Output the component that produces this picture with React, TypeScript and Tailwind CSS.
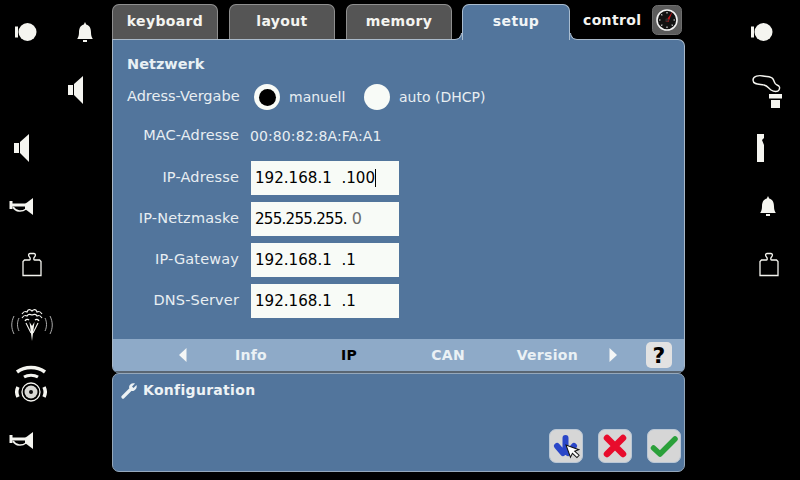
import type { ReactNode } from "react";

const font = "font-['DejaVu_Sans',sans-serif]";

function Ball() {
  return (
    <svg width="24" height="20" viewBox="0 0 24 20">
      <rect x="1" y="4.500" width="3" height="11" fill="#f5f5f0" />
      <circle cx="13.500" cy="10" r="9" fill="#f5f5f0" />
    </svg>
  );
}

function Bell() {
  return (
    <svg width="18" height="22" viewBox="0 0 18 22">
      <path d="M9 1l1.200 2.500C14 4.500 15 8 15 11.500c0 2.500.5 4.500 1.800 6.500H1.200C2.500 16 3 14 3 11.500 3 8 4 4.500 7.800 3.500z" fill="#f5f5f0" />
      <rect x="7" y="19" width="4" height="2" fill="#f5f5f0" />
    </svg>
  );
}

function Speaker() {
  return (
    <svg width="18" height="30" viewBox="0 0 18 30">
      <rect x="1" y="10" width="5" height="10" fill="#f5f5f0" />
      <path d="M7 9L16 1v28L7 20z" fill="#f5f5f0" />
    </svg>
  );
}

function Horn() {
  return (
    <svg width="26" height="20" viewBox="0 0 26 20">
      <path d="M2 5v8M2 9h16" stroke="#f5f5f0" strokeWidth="3" fill="none" />
      <path d="M4 11c3 5 9 5 13 2" stroke="#f5f5f0" strokeWidth="1.500" fill="none" />
      <path d="M16 8l8-6v17l-8-6z" fill="#f5f5f0" />
    </svg>
  );
}

function Weight() {
  return (
    <svg width="20" height="25" viewBox="0 0 20 25">
      <path d="M1 23.500V9.500L2.500 8H7.500C8.500 8 8.500 6 7.500 5 6 3.500 6.500 1.500 8 1.500h4c1.500 0 2 2 .5 3.500-1 1-1 3 0 3h5L19 9.500v14z" fill="none" stroke="#f5f5f0" strokeWidth="1.300" />
    </svg>
  );
}

function Fountain() {
  return (
    <svg width="42" height="36" viewBox="0 0 42 36">
      <path d="M3 28c-3-6-3-12 0-18M8 25c-2-4-2-9 0-13M39 28c3-6 3-12 0-18M34 25c2-4 2-9 0-13" stroke="#bdbdbd" strokeWidth="0.900" fill="none" />
      <path d="M11 8c2-3 3-3 5-2 1-3 3-3 5-1 2-2 4-2 5 1 2-1 3-1 5 2M11 12c2-3 3-3 5-2 1-2 3-2 5-1 2-1 4-1 5 1 2-1 3-1 5 2M14 15c1-2 3-2 4-1M24 14c1-1 3-1 4 1" stroke="#f5f5f0" strokeWidth="1.200" fill="none" />
      <path d="M21 35l-2.500-19 2.500 4 2.500-4z" fill="#f5f5f0" />
      <path d="M20 27l-5-10M22 27l5-10" stroke="#f5f5f0" strokeWidth="1.100" fill="none" />
    </svg>
  );
}

function WifiDial() {
  return (
    <svg width="32" height="40" viewBox="0 0 32 40">
      <path d="M2 9c8-6 20-6 28 0" stroke="#f5f5f0" strokeWidth="3.500" fill="none" />
      <path d="M9 14c4-2.500 10-2.500 14 0" stroke="#f5f5f0" strokeWidth="3" fill="none" />
      <circle cx="16" cy="29" r="9" fill="none" stroke="#f5f5f0" strokeWidth="1.300" />
      <circle cx="16" cy="29" r="6.500" fill="#d8d8d4" />
      <circle cx="16" cy="29" r="2" fill="#111" />
      <path d="M3 24c-1.500 3-1.500 7 0 10M29 24c1.500 3 1.500 7 0 10" stroke="#f5f5f0" strokeWidth="3.500" fill="none" />
    </svg>
  );
}

function Smoke() {
  return (
    <svg width="32" height="36" viewBox="0 0 32 36">
      <path d="M2 8c0-4 6-5 10-4s8 0 10 3 1 5 4 6 3 3 2 5-5 2-8 0-3-4-7-5-11 0-11-5z" fill="none" stroke="#f5f5f0" strokeWidth="1.400" />
      <rect x="18" y="22" width="13" height="4.500" fill="#f5f5f0" />
      <rect x="20" y="28" width="9" height="8" fill="#f5f5f0" />
    </svg>
  );
}

function Wedge() {
  return (
    <svg width="8" height="28" viewBox="0 0 8 28">
      <path d="M0 0h7v4L5 6l2 5v17H0z" fill="#f5f5f0" />
    </svg>
  );
}

function Gauge() {
  return (
    <svg width="30" height="30" viewBox="0 0 30 30">
      <rect x="0.500" y="0.500" width="29" height="29" rx="5" fill="#5b5b5b" stroke="#6e6e6e" />
      <circle cx="15" cy="15" r="10" fill="#111" stroke="#f2f2f2" strokeWidth="1.600" />
      <path d="M15 7v1.500M23 15h-1.500M15 23v-1.500M7 15h1.500M9.300 9.300l1 1M9.300 20.700l1-1M20.700 20.700l-1-1" stroke="#e6e6e6" strokeWidth="1.100" />
      <path d="M13.500 16.500L20.500 6.500 16.500 17z" fill="#c8161c" />
      <circle cx="15" cy="15" r="1.800" fill="#2a2a2a" />
    </svg>
  );
}

function Tab({ label }: { label: string }) {
  return (
    <div className="w-[106px] h-[35px] pb-[2px] flex items-center justify-center rounded-t-[7px] border border-b-0 border-[#8f8f8f] bg-[#555555] text-[#f4f4f0] text-[14px] font-bold tracking-[0.35px]">
      {label}
    </div>
  );
}

function Row({ label, value, last }: { label: string; value: ReactNode; last?: boolean }) {
  return (
    <div className={`flex items-center h-[34px] ${last ? "" : "mb-[7px]"}`}>
      <div className="w-[114px] whitespace-nowrap flex justify-end text-[14.500px] tracking-[0.15px] text-[#e8eef2]">{label}</div>
      <div className="ml-[12px] w-[148px] h-[34px] bg-[#f8fbf7] pl-[4px] flex items-center text-[15.100px] text-black whitespace-pre">
        {value}
      </div>
    </div>
  );
}

function ActionButton({ children }: { children: ReactNode }) {
  return (
    <div className="w-[34px] h-[34px] rounded-[7px] bg-[#d6d6d6] border border-[#b9c7d6] flex items-center justify-center">
      {children}
    </div>
  );
}

export default function App() {
  return (
    <div className={`w-[800px] h-[480px] bg-black flex overflow-hidden ${font}`}>
      {/* left icons */}
      <div className="w-[112px] pt-[3px] flex flex-col">
        <div className="h-[58px] flex items-center pl-[14px]">
          <Ball />
          <div className="ml-[38px]"><Bell /></div>
        </div>
        <div className="h-[58px] flex items-center pl-[67px]"><Speaker /></div>
        <div className="h-[58px] flex items-center pl-[13px]"><Speaker /></div>
        <div className="h-[58px] flex items-center pl-[9px]"><Horn /></div>
        <div className="h-[58px] flex items-center pl-[22px]"><Weight /></div>
        <div className="h-[62px] flex items-center pl-[11px]"><Fountain /></div>
        <div className="h-[56px] flex items-center pl-[15px]"><WifiDial /></div>
        <div className="h-[58px] flex items-center pl-[9px]"><Horn /></div>
      </div>

      {/* center */}
      <div className="w-[573px] pt-[4px] flex flex-col">
        <div className="h-[35px] flex items-end">
          <Tab label="keyboard" />
          <div className="ml-[11px]"><Tab label="layout" /></div>
          <div className="ml-[11px]"><Tab label="memory" /></div>
          <div className="relative ml-[10px] w-[108px] h-[36px] -mb-[1px] z-10 pb-[3px] flex items-center justify-center rounded-t-[7px] border border-b-0 border-[#a9bccf] bg-[#52759c] text-[#f0f4f6] text-[14px] font-bold tracking-[0.35px]">
            setup
            <div className="absolute -left-[8px] bottom-0 w-[7px] h-[7px] bg-[#52759c]">
              <div className="w-full h-full bg-black rounded-br-[7px] border-r border-b border-[#a9bccf]" />
            </div>
            <div className="absolute -right-[8px] bottom-0 w-[7px] h-[7px] bg-[#52759c]">
              <div className="w-full h-full bg-black rounded-bl-[7px] border-l border-b border-[#a9bccf]" />
            </div>
          </div>
          <div className="ml-[13px] w-[69px] pb-[2px] h-[35px] flex items-center text-[#f4f4f0] text-[14px] font-bold tracking-[0.35px]">
            control
          </div>
          <div className="mb-[4px]"><Gauge /></div>
        </div>

        <div className="h-[334px] flex flex-col rounded-tr-[7px] rounded-bl-[7px] rounded-br-[7px] border border-[#a9b9c9] border-b-0 bg-[#52759c] overflow-hidden">
          <div className="flex-1 pt-[15px] pl-[14px]">
            <div className="text-[14.500px] font-bold text-[#e8f0f4] leading-[18px]">Netzwerk</div>
            <div className="flex items-center h-[28px] mt-[10px] text-[14px] text-[#e8eef2]">
              <div className="w-[127px] text-[14.500px]">Adress-Vergabe</div>
              <div className="w-[26px] h-[26px] rounded-full bg-[#f8fbf7] flex items-center justify-center">
                <div className="w-[17px] h-[17px] rounded-full bg-black" />
              </div>
              <div className="ml-[9px] w-[75px]">manuell</div>
              <div className="w-[26px] h-[26px] rounded-full bg-[#f8fbf7]" />
              <div className="ml-[9px]">auto (DHCP)</div>
            </div>
            <div className="flex items-center h-[18px] mt-[16px] text-[14px] text-[#e8eef2]">
              <div className="w-[112px] flex justify-end whitespace-nowrap text-[14.500px] tracking-[0.1px]">MAC-Adresse</div>
              <div className="ml-[11px] tracking-[0.1px]">00:80:82:8A:FA:A1</div>
            </div>
            <div className="mt-[16px] -ml-[2px]">
              <Row label="IP-Adresse" value={<>192.168.1  .100<span className="inline-block w-px h-[18px] bg-black" /></>} />
              <Row label="IP-Netzmaske" value={<><span className="tracking-[-0.75px]">255.255.255.</span><span className="ml-[5px] text-[16px] text-[#6b6b6b]">0</span></>} />
              <Row label="IP-Gateway" value="192.168.1  .1" />
              <Row label="DNS-Server" value="192.168.1  .1" last />
            </div>
          </div>

          {/* sub navigation */}
          <div className="h-[34px] shrink-0 bg-[#8eaac8] border-b-2 border-[#5a6672] flex items-center text-[14px] font-bold tracking-[0.3px] text-[#eaf1f5]">
            <div className="w-[74px] flex justify-end">
              <svg width="8" height="14" viewBox="0 0 8 14"><path d="M7.500 0v14L0 7z" fill="#f4f6f6" /></svg>
            </div>
            <div className="w-[80px] text-right">Info</div>
            <div className="w-[90px] text-right text-black">IP</div>
            <div className="w-[108px] text-right">CAN</div>
            <div className="w-[113px] text-right">Version</div>
            <div className="ml-[31px]">
              <svg width="8" height="14" viewBox="0 0 8 14"><path d="M.5 0v14L8 7z" fill="#f4f6f6" /></svg>
            </div>
            <div className="ml-[29px] w-[26px] h-[26px] rounded-[5px] bg-[#e2e2e2] flex items-center justify-center text-black text-[22px] font-bold">?</div>
          </div>
        </div>

        <div className="h-[99px] rounded-[7px] border border-[#95a8bb] bg-[#52759c] flex flex-col justify-between">
          <div className="flex items-center pl-[8px] pt-[6px] text-[14px] font-bold tracking-[0.3px] text-[#eef3f5]">
            <svg width="17" height="17" viewBox="0 0 17 17" className="mr-[5px]">
              <path d="M2 15L9.500 7.500" stroke="#eef3f5" strokeWidth="3.200" strokeLinecap="round" />
              <path d="M8 5.500C8 2.500 11 .5 14 1.500L11 4.500l1.500 1.500 3-3C16.500 6 14 9.500 10.500 9z" fill="#eef3f5" />
            </svg>
            Konfiguration
          </div>
          <div className="flex justify-end gap-[15px] pr-[3px] pb-[8px]">
            <ActionButton>
              <svg width="28" height="28" viewBox="0 0 28 28">
                <path d="M13.500 6v14M5 14l6 7M22 14l-6 7" stroke="#2a46c8" strokeWidth="6" strokeLinecap="round" fill="none" />
                <path d="M14 13v13l3.200-3 2.800 5.500 2.800-1.400-2.800-5.300h4.500z" transform="rotate(-20 14 13)" fill="#fff" stroke="#111" strokeWidth="1" />
              </svg>
            </ActionButton>
            <ActionButton>
              <svg width="24" height="24" viewBox="0 0 24 24">
                <path d="M4 4l16 16M20 4L4 20" stroke="#e80c2c" strokeWidth="6.500" strokeLinecap="round" />
              </svg>
            </ActionButton>
            <ActionButton>
              <svg width="28" height="24" viewBox="0 0 28 24">
                <path d="M3.500 14l6.500 6L25 5" stroke="#2ba03a" strokeWidth="5.500" strokeLinecap="round" strokeLinejoin="round" fill="none" />
              </svg>
            </ActionButton>
          </div>
        </div>
      </div>

      {/* right icons */}
      <div className="flex-1 pt-[3px] flex flex-col">
        <div className="h-[58px] flex items-center pl-[65px]"><Ball /></div>
        <div className="h-[58px] flex items-center pl-[66px]"><Smoke /></div>
        <div className="h-[58px] flex items-center pl-[72px]"><Wedge /></div>
        <div className="h-[58px] flex items-center pl-[74px]"><Bell /></div>
        <div className="h-[58px] flex items-center pl-[74px]"><Weight /></div>
      </div>
    </div>
  );
}
